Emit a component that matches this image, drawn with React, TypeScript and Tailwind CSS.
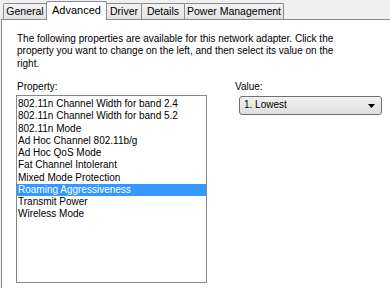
import React from 'react'

const tabs = [
  { label: 'General', w: 'w-[44px]' },
  { label: 'Advanced', w: 'w-[61px]', active: true },
  { label: 'Driver', w: 'w-[36px]' },
  { label: 'Details', w: 'w-[44px]' },
  { label: 'Power Management', w: 'w-[100px]' },
]

const props = [
  '802.11n Channel Width for band 2.4',
  '802.11n Channel Width for band 5.2',
  '802.11n Mode',
  'Ad Hoc Channel 802.11b/g',
  'Ad Hoc QoS Mode',
  'Fat Channel Intolerant',
  'Mixed Mode Protection',
  'Roaming Aggressiveness',
  'Transmit Power',
  'Wireless Mode',
]

export default function App() {
  const [sel, setSel] = React.useState(7)
  return (
    <div className="w-[390px] h-[288px] bg-[#f0f0f0] overflow-hidden flex flex-col text-[10px] leading-[12.25px] text-black font-['Liberation_Sans',Arial,sans-serif]">
      {/* tab strip */}
      <div className="h-[19px] flex items-end pl-[3px] relative z-10 text-[10.5px]">
        {tabs.map((t, i) =>
          t.active ? (
            <div
              key={t.label}
              className={`${t.w} h-[19px] -mb-px ${i ? '-ml-px' : ''} bg-white border-x border-t border-[#898c95] rounded-t-[2px] flex items-center justify-center text-[11px] pb-[2px]`}
            >
              {t.label}
            </div>
          ) : (
            <div
              key={t.label}
              className={`${t.w} h-[16px] ${i ? '-ml-px' : ''} bg-gradient-to-b from-[#f2f2f2] to-[#e3e3e3] border-x border-t border-[#898c95] rounded-t-[2px] flex items-center justify-center`}
            >
              {t.label}
            </div>
          )
        )}
      </div>

      {/* page */}
      <div className="flex-1 ml-px bg-white border-l border-t border-[#898c95] pl-[15px] pt-[13px]">
        <p className="whitespace-nowrap">
          The following properties are available for this network adapter. Click the
          <br />
          property you want to change on the left, and then select its value on the
          <br />
          right.
        </p>

        <div className="flex mt-[11px]">
          <div className="w-[191px] -ml-px">
            <div className="pl-px">Property:</div>
            <div className="mt-[2px] h-[188px] border border-[#828790] bg-white pt-[2px]">
              {props.map((p, i) => (
                <div
                  key={p}
                  onClick={() => setSel(i)}
                  className={`pl-px h-[12.25px] cursor-default ${i === sel ? 'bg-[#3399ff] text-white' : ''}`}
                >
                  {p}
                </div>
              ))}
            </div>
          </div>

          <div className="ml-[28px]">
            <div>Value:</div>
            <div className="mt-[3px] ml-[4px] w-[143px] h-[19px] rounded-[3px] border border-[#707070] bg-gradient-to-b from-[#f2f2f2] to-[#dfdfdf] flex items-center pl-[4px] pr-[6px]">
              <span className="flex-1">1. Lowest</span>
              <svg width="7" height="4" viewBox="0 0 7 4">
                <path d="M0 0h7L3.5 4z" fill="#000" />
              </svg>
            </div>
          </div>
        </div>
      </div>
    </div>
  )
}
